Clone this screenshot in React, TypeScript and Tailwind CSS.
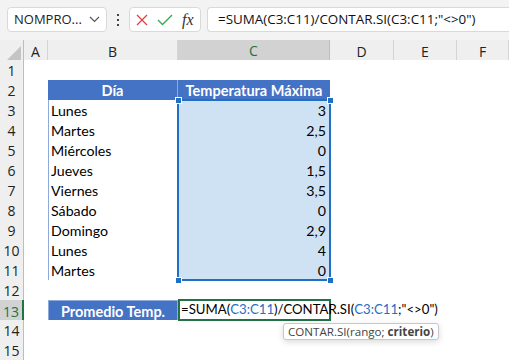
import React from "react";

const COLS = "grid grid-cols-[24px_24px_130px_152px_64px_63px_52px]";
const UI = { fontFamily: '"Open Sans", "Noto Sans", sans-serif' };
const CELL = { fontFamily: 'Lato, "Liberation Sans", sans-serif' };

const data: [string, string][] = [
  ["Lunes", "3"],
  ["Martes", "2,5"],
  ["Miércoles", "0"],
  ["Jueves", "1,5"],
  ["Viernes", "3,5"],
  ["Sábado", "0"],
  ["Domingo", "2,9"],
  ["Lunes", "4"],
  ["Martes", "0"],
];

const RowHead = ({ n, active }: { n: number; active?: boolean }) => (
  <div
    className={
      active
        ? "flex items-center justify-center bg-[#d2d2d2] border-r-2 border-r-[#217346] border-b border-b-[#d4d4d4] text-[14px] text-[#217346]"
        : "flex items-center justify-center bg-[#efefef] border-r border-r-[#bdbdbd] border-b border-b-[#d4d4d4] text-[14px] text-[#222]"
    }
    style={UI}
  >
    {n}
  </div>
);

const Empty = () => <div className="bg-white" />;

const Toolbar = () => (
  <div className="h-[40px] bg-[#f3f3f3] flex items-start pt-[7px] pl-[7px] gap-0" style={UI}>
    <div className="w-[100px] h-[25px] bg-white border border-[#d9d9d9] rounded-[4px] flex items-center justify-between pl-[6px] pr-[6px] text-[13px] text-[#222]">
      <span>NOMPRO...</span>
      <svg width="11" height="7" viewBox="0 0 11 7">
        <path d="M1 1l4.5 4.5L10 1" fill="none" stroke="#555" strokeWidth="1.2" />
      </svg>
    </div>
    <div className="w-[22px] h-[25px] flex flex-col items-center justify-center gap-[3px]">
      <span className="w-[2px] h-[2px] bg-[#444]" />
      <span className="w-[2px] h-[2px] bg-[#444]" />
      <span className="w-[2px] h-[2px] bg-[#444]" />
    </div>
    <div className="w-[72px] h-[25px] bg-white border border-[#d9d9d9] rounded-[4px] flex items-center pl-[6px] gap-[9px]">
      <svg width="12" height="12" viewBox="0 0 12 12">
        <path d="M1 1l10 10M11 1L1 11" stroke="#e0413f" strokeWidth="1.3" />
      </svg>
      <svg width="16" height="12" viewBox="0 0 16 12">
        <path d="M1 6l4.5 4.5L15 1" fill="none" stroke="#3aa651" strokeWidth="1.3" />
      </svg>
      <span className="text-[16px] italic text-[#333] leading-none" style={{ fontFamily: '"Liberation Serif", serif' }}>
        fx
      </span>
    </div>
    <div className="ml-[6px] flex-1 h-[25px] bg-white border border-r-0 border-[#d9d9d9] rounded-l-[4px] flex items-center pl-[10px] text-[13.4px] text-[#111]">
      =SUMA(C3:C11)/CONTAR.SI(C3:C11;"&lt;&gt;0")
    </div>
  </div>
);

const ColHeader = () => (
  <div className={`${COLS} h-[20px] text-[14px] text-[#222]`} style={UI}>
    <div className="bg-[#efefef] border-r border-b border-[#bdbdbd] flex items-end justify-end p-[2px]">
      <svg width="14" height="14" viewBox="0 0 14 14">
        <path d="M14 0V14H0Z" fill="#c4c4c4" />
      </svg>
    </div>
    {["A", "B"].map((c) => (
      <div key={c} className="bg-[#efefef] border-r border-r-[#d4d4d4] border-b border-b-[#bdbdbd] flex items-center justify-center">
        {c}
      </div>
    ))}
    <div className="bg-[#d2d2d2] border-r border-r-[#bdbdbd] border-b-2 border-b-[#217346] flex items-center justify-center text-[#217346]">
      C
    </div>
    {["D", "E", "F"].map((c) => (
      <div key={c} className="bg-[#efefef] border-r border-r-[#d4d4d4] border-b border-b-[#bdbdbd] flex items-center justify-center">
        {c}
      </div>
    ))}
  </div>
);

export default function App() {
  return (
    <div className="w-[509px] h-[360px] overflow-hidden bg-white">
      <Toolbar />
      <ColHeader />
      <div className="relative" style={CELL}>
        {/* row 1 */}
        <div className={`${COLS} h-[20px]`}>
          <RowHead n={1} />
          <Empty /><Empty /><Empty /><Empty /><Empty /><Empty />
        </div>
        {/* row 2 header */}
        <div className={`${COLS} h-[20px] text-[14.5px]`}>
          <RowHead n={2} />
          <Empty />
          <div className="bg-[#4472c4] border-r border-[#8eaadb] text-white font-bold flex items-center justify-center">
            Día
          </div>
          <div className="bg-[#4472c4] text-white font-bold flex items-center justify-center">
            Temperatura Máxima
          </div>
          <Empty /><Empty /><Empty />
        </div>
        {data.map(([d, v], i) => (
          <div key={i} className={`${COLS} h-[20px] text-[14.2px] text-black`}>
            <RowHead n={i + 3} />
            <Empty />
            <div className="bg-white border-l border-b border-[#8eaadb] flex items-center pl-[2px]">{d}</div>
            <div className="bg-[#cfe2f3] border-b border-[#8eaadb] flex items-center justify-end pr-[4px]">{v}</div>
            <Empty /><Empty /><Empty />
          </div>
        ))}
        <div className={`${COLS} h-[20px]`}>
          <RowHead n={12} />
          <Empty /><Empty /><Empty /><Empty /><Empty /><Empty />
        </div>
        <div className={`${COLS} h-[20px] text-[14.5px]`}>
          <RowHead n={13} active />
          <Empty />
          <div className="bg-[#4472c4] border border-[#8eaadb] text-white font-bold flex items-center justify-center">
            Promedio Temp.
          </div>
          <div className="relative bg-white">
            <div className="absolute left-0 top-[-1px] w-[153px] h-[22px] border-2 border-[#217346]" />
            <div className="absolute left-[3px] top-0 h-[20px] flex items-center whitespace-nowrap text-black text-[13.2px] z-10">
              =SUMA(<span className="text-[#1f6fc5]">C3:C11</span>)/CONTAR.SI(
              <span className="text-[#1f6fc5]">C3:C11</span>;"&lt;&gt;0")
            </div>
          </div>
          <Empty /><Empty /><Empty />
        </div>
        <div className={`${COLS} h-[20px]`}>
          <RowHead n={14} />
          <Empty /><Empty /><Empty /><Empty /><Empty /><Empty />
        </div>
        <div className={`${COLS} h-[20px]`}>
          <RowHead n={15} />
          <Empty /><Empty /><Empty /><Empty /><Empty /><Empty />
        </div>

        {/* range selection C3:C11 */}
        <div className="absolute left-[177px] top-[39px] w-[154px] h-[182px] border-2 border-[#1f6fc5] pointer-events-none" />
        <div className="absolute left-[175px] top-[37px] w-[7px] h-[7px] bg-[#1f6fc5] border border-white" />
        <div className="absolute left-[327px] top-[37px] w-[7px] h-[7px] bg-[#1f6fc5] border border-white" />
        <div className="absolute left-[175px] top-[217px] w-[7px] h-[7px] bg-[#1f6fc5] border border-white" />
        <div className="absolute left-[327px] top-[217px] w-[7px] h-[7px] bg-[#1f6fc5] border border-white" />

        {/* tooltip */}
        <div
          className="absolute left-[283px] top-[263px] h-[17px] px-[4px] bg-white border border-[#c8c8c8] rounded-[3px] shadow-[0_2px_6px_rgba(0,0,0,0.15)] flex items-center text-[11.6px] text-[#444] whitespace-nowrap z-20"
          style={UI}
        >
          CONTAR.SI(rango; <b className="ml-[3px]">criterio</b>)
        </div>
      </div>
    </div>
  );
}
